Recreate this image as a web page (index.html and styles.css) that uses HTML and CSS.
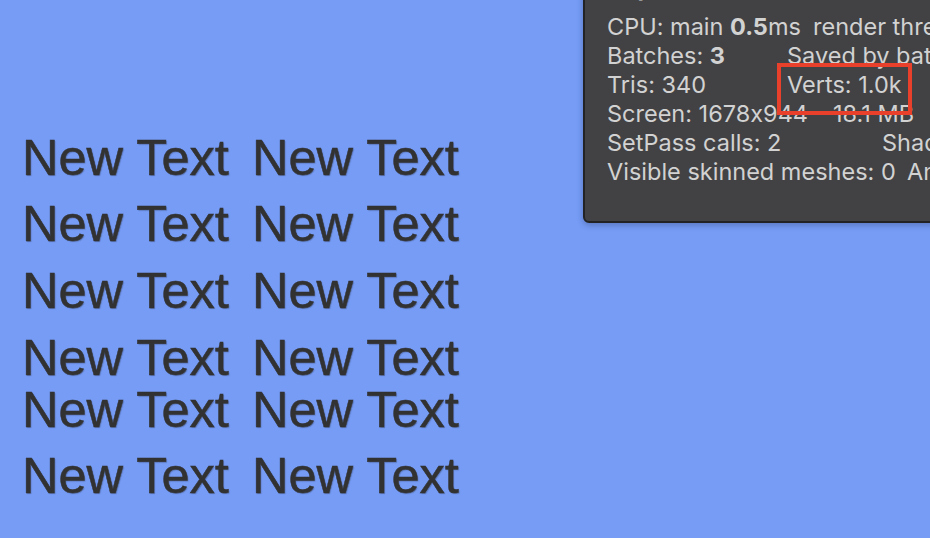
FILE: index.html
```html
<!DOCTYPE html>
<html>
<head>
<meta charset="utf-8">
<link rel="stylesheet" href="styles.css">
</head>
<body>
<main class="canvas">
  <section class="texts">
    <div class="row r1"><span class="nt">New Text</span><span class="nt">New Text</span></div>
    <div class="row r2"><span class="nt">New Text</span><span class="nt">New Text</span></div>
    <div class="row r3"><span class="nt">New Text</span><span class="nt">New Text</span></div>
    <div class="row r4"><span class="nt">New Text</span><span class="nt">New Text</span></div>
    <div class="row r5"><span class="nt">New Text</span><span class="nt">New Text</span></div>
    <div class="row r6"><span class="nt">New Text</span><span class="nt">New Text</span></div>
  </section>
  <aside class="stats">
    <div class="title">Graphics:</div>
    <div class="line"><span class="c1r">CPU: main <b>0.5</b>ms</span><span>render thread 0.2ms</span></div>
    <div class="line"><span class="c1">Batches: <b>3</b></span><span>Saved by batching: 0</span></div>
    <div class="line"><span class="c1">Tris: 340</span><span>Verts: 1.0k</span></div>
    <div class="line"><span class="c1s">Screen: 1678x944</span><span>18.1 MB</span></div>
    <div class="line"><span class="c1w">SetPass calls: 2</span><span>Shadow casters: 0</span></div>
    <div class="line"><span class="c1v">Visible skinned meshes: 0</span><span>Animation components playing: 0</span></div>
    <div class="highlight"></div>
  </aside>
</main>
</body>
</html>
```
FILE: styles.css
```css
html, body {
  margin: 0;
  padding: 0;
}
body {
  width: 930px;
  height: 538px;
  overflow: hidden;
  background: #769cf6;
}
.canvas {
  position: relative;
  width: 930px;
  height: 538px;
}
.texts {
  padding: 130px 0 0 22px;
  display: flex;
  flex-direction: column;
}
.row {
  display: flex;
  height: 67px;
}
.row.r1 { height: 66px; }
.row.r4 { height: 52px; }
.row.r5 { height: 66px; }
.nt {
  width: 230px;
  font-family: "Liberation Sans", Arial, sans-serif;
  font-size: 50.5px;
  line-height: 56px;
  color: #323232;
  white-space: nowrap;
  -webkit-text-stroke: 0.5px #323232;
  text-shadow: 1px 1px 1px rgba(30, 30, 40, 0.3);
}
.stats {
  position: absolute;
  left: 583px;
  top: -12px;
  width: 380px;
  height: 235px;
  box-sizing: border-box;
  background: #424244;
  border: 2px solid #232325;
  border-radius: 6px;
  box-shadow: 0 2px 6px rgba(20, 30, 60, 0.3);
  padding: 0 0 0 22px;
  font-family: Inter, "Noto Sans", sans-serif;
  font-size: 23.5px;
  font-feature-settings: "calt" 0;
  color: #d2d2d2;
  white-space: nowrap;
  overflow: hidden;
}
.title {
  font-weight: 700;
  height: 22px;
  line-height: 22px;
  margin-left: -10px;
  margin-top: -13px;
  margin-bottom: 13px;
}
.line {
  display: flex;
  height: 29px;
  line-height: 29px;
}
.line > span { flex-shrink: 0; }
.line b { font-weight: 700; }
.c1r { width: 206px; }
.c1 { width: 180px; }
.c1s { width: 226px; }
.c1w { width: 275px; }
.c1v { width: 300px; }
.highlight {
  position: absolute;
  left: 192px;
  top: 73px;
  width: 135px;
  height: 52px;
  box-sizing: border-box;
  border: 4px solid #e8402a;
}
```
